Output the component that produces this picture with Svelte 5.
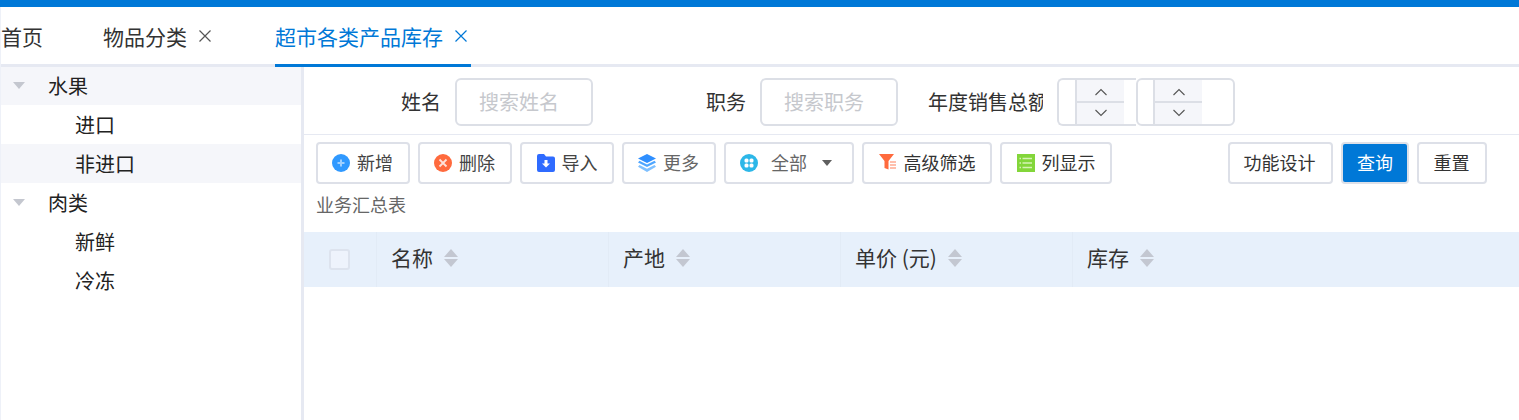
<script>
  const tree = [
    { label: '水果', level: 0, hover: true },
    { label: '进口', level: 1 },
    { label: '非进口', level: 1, hover: true },
    { label: '肉类', level: 0 },
    { label: '新鲜', level: 1 },
    { label: '冷冻', level: 1 }
  ];
  const cols = [
    { label: '名称', w: 232 },
    { label: '产地', w: 232 },
    { label: '单价 (元)', w: 232 },
    { label: '库存', w: 300, last: true }
  ];
</script>

<div class="page">
  <div class="topbar"></div>
  <div class="tabs">
    <div class="tab t1">首页</div>
    <div class="tab t2">物品分类<svg class="close" viewBox="0 0 14 14"><path d="M1.5 1.5l11 11M12.5 1.5l-11 11" /></svg></div>
    <div class="tab t3 active">超市各类产品库存<svg class="close" viewBox="0 0 14 14"><path d="M1.5 1.5l11 11M12.5 1.5l-11 11" /></svg></div>
  </div>
  <div class="body">
    <aside class="side">
      {#each tree as n}
        <div class="node" class:hover={n.hover} class:l1={n.level === 1}>
          {#if n.level === 0}<span class="caret"></span>{/if}{n.label}
        </div>
      {/each}
    </aside>
    <main class="main">
      <div class="filter">
        <span class="flabel l-a">姓名</span>
        <div class="input">搜索姓名</div>
        <span class="flabel l-b">职务</span>
        <div class="input">搜索职务</div>
        <span class="flabel l-c">年度销售总额</span>
        <div class="range">
          <div class="num">
            <div class="spin"><svg viewBox="0 0 14 8"><path d="M1.5 7L7 1.5 12.5 7" /></svg><svg viewBox="0 0 14 8"><path d="M1.5 1L7 6.5 12.5 1" /></svg></div>
          </div>
          <div class="num last">
            <div class="spin"><svg viewBox="0 0 14 8"><path d="M1.5 7L7 1.5 12.5 7" /></svg><svg viewBox="0 0 14 8"><path d="M1.5 1L7 6.5 12.5 1" /></svg></div>
          </div>
        </div>
      </div>
      <div class="toolbar">
        <button class="btn b1">
          <svg class="ic" viewBox="0 0 18 18"><circle cx="9" cy="9" r="9" fill="#3099ff" /><path d="M9 5.5v7M5.5 9h7" stroke="#9fd0ff" stroke-width="2" /></svg>
          <span class="muted">新增</span>
        </button>
        <button class="btn b1">
          <svg class="ic" viewBox="0 0 18 18"><circle cx="9" cy="9" r="9" fill="#ff6a3d" /><path d="M5.5 5.5l7 7M12.5 5.5l-7 7" stroke="#ffe1d8" stroke-width="1.8" /></svg>
          <span class="muted">删除</span>
        </button>
        <button class="btn b1 b-in">
          <svg class="ic" viewBox="0 0 18 18"><path d="M0 2a2 2 0 0 1 2-2h5l2 2.500h7a2 2 0 0 1 2 2V16a2 2 0 0 1-2 2H2a2 2 0 0 1-2-2z" fill="#2f6bff" /><path d="M7.500 6h3v3.500H13L9 13.500 5 9.500h2.500z" fill="#fff" /></svg>
          <span class="muted">导入</span>
        </button>
        <button class="btn b1">
          <svg class="ic" viewBox="0 0 18 18"><path d="M9 0l9 4.500-9 4.500-9-4.500z" fill="#2f8fff" /><path d="M1.500 6.800L9 10.600l7.500-3.800L18 8.400l-9 4.700-9-4.700z" fill="#4fa6ff" /><path d="M1.500 11L9 14.800 16.500 11 18 12.800 9 18 0 12.800z" fill="#7fc0ff" /></svg>
          <span class="gray">更多</span>
        </button>
        <button class="btn b2">
          <svg class="ic" viewBox="0 0 18 18"><circle cx="9" cy="9" r="9" fill="#2cb7e8" /><g fill="#fff"><rect x="4.500" y="4.500" width="4" height="4" rx="1.500" /><rect x="9.500" y="4.500" width="4" height="4" rx="1.500" /><rect x="4.500" y="9.500" width="4" height="4" rx="1.500" /><rect x="9.500" y="9.500" width="4" height="4" rx="1.500" /></g></svg>
          <span class="gray all">全部</span>
          <span class="drop"></span>
        </button>
        <button class="btn b3">
          <svg class="ic" viewBox="0 0 18 18"><path d="M0 0h15l-5.500 7v8.500L5.500 14V7z" fill="#ff6a3d" /><path d="M11 8h6M11 11h6M11 14h6" stroke="#ffab91" stroke-width="1.600" /></svg>
          <span>高级筛选</span>
        </button>
        <button class="btn b4">
          <svg class="ic" viewBox="0 0 18 18"><rect width="18" height="18" fill="#83d63a" /><path d="M5.500 4.500H15M5.500 9H15M5.500 13.500H15" stroke="#d6f3b5" stroke-width="1.300" /><path d="M2.500 4.500h1.500M2.500 9h1.500M2.500 13.500h1.500" stroke="#d6f3b5" stroke-width="1.300" /></svg>
          <span>列显示</span>
        </button>
        <div class="spacer"></div>
        <button class="btn plain design"><span>功能设计</span></button>
        <button class="btn primary"><span>查询</span></button>
        <button class="btn plain reset"><span>重置</span></button>
      </div>
      <div class="caption">业务汇总表</div>
      <div class="thead">
        <div class="cell check"><span class="box"></span></div>
        {#each cols as c}
          <div class="cell" class:last={c.last} style="width:{c.w}px"><span class="ctext">{c.label}</span><span class="sort"><i class="up"></i><i class="down"></i></span></div>
        {/each}
      </div>
    </main>
  </div>
</div>

<style>
  :global(body) {
    margin: 0;
    background: #fff;
    overflow: hidden;
  }
  .page {
    height: 420px;
    display: flex;
    flex-direction: column;
    font-family: "Noto Sans CJK SC", "Liberation Sans", sans-serif;
    font-weight: 400;
    color: #333;
    overflow: hidden;
    background: linear-gradient(90deg, #eef1f8 1px, #fff 1px);
  }
  .topbar {
    height: 7px;
    background: #0078d7;
    flex: none;
  }
  .tabs {
    position: relative;
    z-index: 1;
    height: 57px;
    flex: none;
    display: flex;
    border-bottom: 3px solid #e6e9f2;
    font-size: 21px;
    margin-left: 1px;
  }
  .tab {
    height: 60px;
    line-height: 58px;
    padding-bottom: 2px;
    box-sizing: border-box;
    display: flex;
    align-items: center;
  }
  .t1 { width: 102px; }
  .t2 { width: 172px; }
  .t3 { width: 196px; }
  .active {
    color: #0078d7;
    border-bottom: 3px solid #0078d7;
    padding-bottom: 0;
  }
  .close {
    width: 14px;
    height: 14px;
    margin-left: 11px;
    fill: none;
    stroke: #555;
    stroke-width: 1.2;
  }
  .active .close { stroke: #0078d7; }
  .body {
    flex: 1;
    display: flex;
    min-height: 0;
  }
  .side {
    width: 300px;
    margin-left: 1px;
    flex: none;
    border-right: 3px solid #e6e9f2;
    font-size: 20px;
  }
  .node {
    height: 39px;
    line-height: 39px;
    padding-left: 47px;
    position: relative;
    color: #222;
    top: -1px;
  }
  .node.l1 { padding-left: 74px; }
  .node.hover { background: #f5f6fa; }
  .caret {
    position: absolute;
    left: 12px;
    top: 16px;
    border: 6px solid transparent;
    border-top: 7px solid #c4c7cf;
    border-bottom: 0;
  }
  .main {
    flex: 1;
    min-width: 0;
    background: #fff;
  }
  .filter {
    height: 65px;
    padding-top: 2px;
    border-bottom: 1px solid #e6e9f2;
    display: flex;
    align-items: center;
    font-size: 20px;
    color: #333;
  }
  .flabel { white-space: nowrap; }
  .l-a { margin-left: 97px; }
  .l-b { margin-left: 113px; }
  .l-c { margin-left: 30px; width: 115px; overflow: hidden; }
  .input {
    box-sizing: border-box;
    width: 138px;
    height: 48px;
    line-height: 44px;
    border: 2px solid #dcdfe6;
    border-radius: 6px;
    margin-left: 14px;
    padding-left: 22px;
    font-size: 20px;
    color: #c6c8cd;
  }
  .range {
    margin-left: 14px;
    display: flex;
    width: 178px;
  }
  .num {
    box-sizing: border-box;
    width: 79px;
    height: 48px;
    border: 2px solid #dcdfe6;
    border-radius: 6px 0 0 6px;
    padding-left: 16px;
    border-right: 0;
  }
  .num.last {
    width: 99px;
    padding-left: 15px;
    border-right: 2px solid #dcdfe6;
    border-radius: 6px;
  }
  .spin {
    width: 49px;
    height: 44px;
    box-sizing: border-box;
    background: #f5f6fa;
    border-left: 2px solid #dcdfe6;
    display: flex;
    flex-direction: column;
    align-items: center;
    justify-content: space-between;
    padding: 8px 0 7px;
    background-image: linear-gradient(#dcdfe6, #dcdfe6);
    background-size: 100% 2px;
    background-position: 0 21px;
    background-repeat: no-repeat;
  }
  .spin svg {
    width: 14px;
    height: 8px;
    fill: none;
    stroke: #555;
    stroke-width: 1.1;
  }
  .toolbar {
    display: flex;
    padding: 7px 0 0 12px;
    gap: 8px;
    align-items: flex-start;
  }
  .btn {
    box-sizing: border-box;
    height: 42px;
    border: 2px solid #dde0e8;
    border-radius: 4px;
    background: #fff;
    font-family: inherit;
    font-size: 18px;
    color: #333;
    display: flex;
    align-items: center;
    justify-content: center;
    padding: 0;
    gap: 7px;
  }
  .btn span:not(.drop) { margin-bottom: 3px; }
  .b1 { width: 94px; padding-right: 1px; }
  .b-in { padding-right: 0; }
  .b2 { width: 130px; justify-content: flex-start; padding-left: 14px; gap: 0; }
  .b3 { width: 130px; }
  .b4 { width: 112px; }
  .ic { width: 18px; height: 18px; flex: none; }
  .muted { color: #444; }
  .gray { color: #666; }
  .all { margin-left: 13px; }
  .drop {
    margin-left: 15px;
    border: 5.500px solid transparent;
    border-top: 6px solid #5f5f5f;
    border-bottom: 0;
  }
  .spacer { width: 100px; flex: none; }
  .design { width: 105px; padding-right: 2px; }
  .primary {
    width: 68px;
    background: #0078d7;
    color: #fff;
  }
  .reset { width: 70px; padding-right: 1px; }
  .caption {
    height: 48px;
    padding: 7px 0 0 12px;
    box-sizing: border-box;
    font-size: 18px;
    color: #666;
    line-height: 27px;
  }
  .thead {
    height: 55px;
    background: #e7f0fb;
    display: flex;
    font-size: 21px;
    color: #333;
  }
  .cell {
    height: 55px;
    box-sizing: border-box;
    padding-left: 14px;
    border-right: 1px solid #e2ebf6;
    display: flex;
    align-items: center;
    gap: 11px;
    white-space: pre;
  }
  .cell.last { border-right: 0; }
  .ctext { margin-bottom: 5px; }
  .check {
    width: 73px;
    padding-left: 25px;
  }
  .box {
    box-sizing: border-box;
    width: 21px;
    height: 21px;
    background: #eef3fc;
    border: 2px solid #dde3ee;
    border-radius: 3px;
  }
  .sort {
    display: flex;
    flex-direction: column;
    gap: 2px;
    margin-bottom: 3px;
  }
  .sort i {
    display: block;
    width: 0;
    height: 0;
    border-left: 7.500px solid transparent;
    border-right: 7.500px solid transparent;
  }
  .sort .up { border-bottom: 8px solid #c3c7d1; }
  .sort .down { border-top: 8px solid #c3c7d1; }
</style>
